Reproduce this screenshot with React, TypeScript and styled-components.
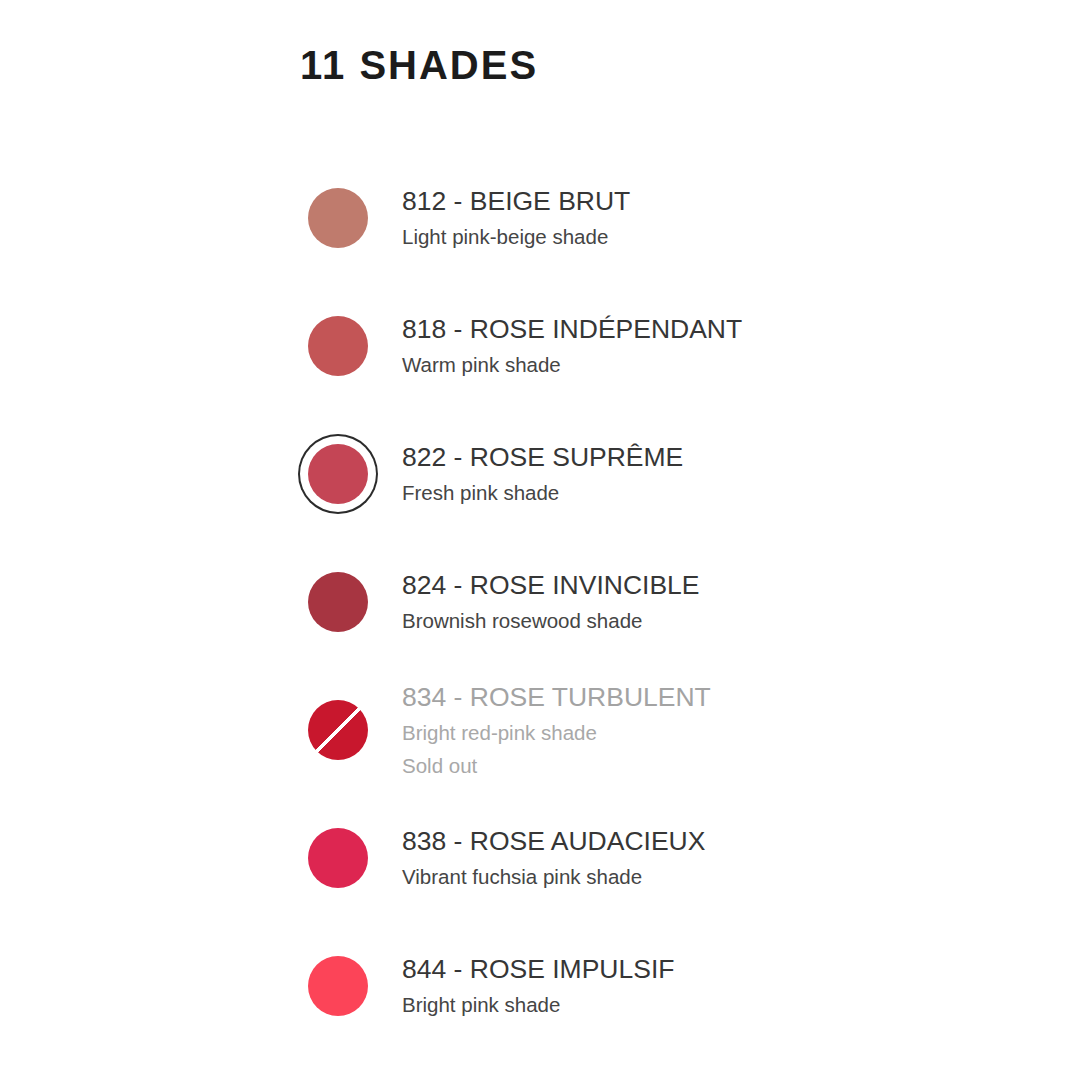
import styled, { createGlobalStyle, css } from "styled-components"

type Shade = {
  code: string
  name: string
  description: string
  color: string
  selected?: boolean
  soldOut?: boolean
}

const shades: Shade[] = [
  { code: "812", name: "BEIGE BRUT", description: "Light pink-beige shade", color: "#bf7b6d" },
  { code: "818", name: "ROSE INDÉPENDANT", description: "Warm pink shade", color: "#c35556" },
  { code: "822", name: "ROSE SUPRÊME", description: "Fresh pink shade", color: "#c44555", selected: true },
  { code: "824", name: "ROSE INVINCIBLE", description: "Brownish rosewood shade", color: "#a73541" },
  { code: "834", name: "ROSE TURBULENT", description: "Bright red-pink shade", color: "#c8172d", soldOut: true },
  { code: "838", name: "ROSE AUDACIEUX", description: "Vibrant fuchsia pink shade", color: "#dd2651" },
  { code: "844", name: "ROSE IMPULSIF", description: "Bright pink shade", color: "#fc4458" },
]

export default function App() {
  return (
    <>
      <GlobalStyle />
      <Page>
        <Heading>11 SHADES</Heading>

        <ShadeList>
          {shades.map((shade) => (
            <ShadeRow key={shade.code}>
              <SwatchSlot>
                <Swatch
                  $color={shade.color}
                  $selected={shade.selected}
                  $soldOut={shade.soldOut}
                />
              </SwatchSlot>
              <ShadeText $muted={shade.soldOut}>
                <strong>
                  {shade.code} - {shade.name}
                </strong>
                <span>{shade.description}</span>
                {shade.soldOut && <span>Sold out</span>}
              </ShadeText>
            </ShadeRow>
          ))}
        </ShadeList>
      </Page>
    </>
  )
}

const GlobalStyle = createGlobalStyle`
  html, body {
    margin: 0;
    padding: 0;
    background: #ffffff;
  }

  body {
    font-family: "Liberation Sans", Arial, sans-serif;
  }
`

const Page = styled.main`
  width: 1080px;
  height: 1080px;
  box-sizing: border-box;
  padding: 45px 0 0 298px;
  background: #ffffff;
`

const Heading = styled.h1`
  margin: 0 0 69px;
  padding-left: 2px;

  font: 700 40px/40px "Liberation Sans", Arial, sans-serif;
  letter-spacing: 2px;
  color: #1c1c1c;
`

const ShadeList = styled.ul`
  margin: 0;
  padding: 0;
  list-style: none;
`

const ShadeRow = styled.li`
  display: grid;
  grid-template-columns: 80px 1fr;
  align-items: center;
  column-gap: 24px;

  height: 128px;
`

const SwatchSlot = styled.div`
  display: flex;
  align-items: center;
  justify-content: center;

  width: 80px;
  height: 80px;
`

const Swatch = styled.div<{ $color: string; $selected?: boolean; $soldOut?: boolean }>`
  width: 60px;
  height: 60px;

  border-radius: 50%;
  background: ${({ $color }) => $color};

  ${({ $selected }) =>
    $selected &&
    css`
      box-shadow: 0 0 0 8px #ffffff, 0 0 0 10px #2b2b2b;
    `}

  ${({ $soldOut, $color }) =>
    $soldOut &&
    css`
      background: linear-gradient(
        135deg,
        ${$color} 47.8%,
        #ffffff 47.8%,
        #ffffff 52.2%,
        ${$color} 52.2%
      );
    `}
`

const ShadeText = styled.div<{ $muted?: boolean }>`
  display: flex;
  flex-direction: column;

  strong {
    font-weight: 400;
    font-size: 26.5px;
    line-height: 36px;
    color: ${({ $muted }) => ($muted ? "#a3a3a3" : "#363636")};
  }

  span {
    font-size: 20.5px;
    line-height: 33px;
    color: ${({ $muted }) => ($muted ? "#a8a8a8" : "#454545")};
  }

  strong + span {
    margin-top: 1px;
  }
`
